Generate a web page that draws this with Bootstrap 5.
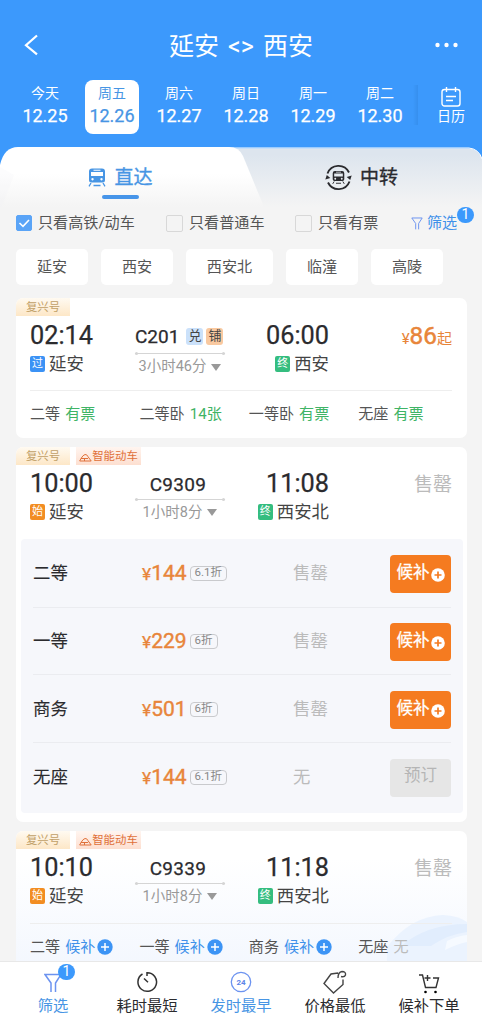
<!DOCTYPE html>
<html lang="zh-CN">
<head>
<meta charset="utf-8">
<meta name="viewport" content="width=device-width, initial-scale=1">
<title>延安 - 西安</title>
<link href="https://cdn.jsdelivr.net/npm/bootstrap@5.3.0/dist/css/bootstrap.min.css" rel="stylesheet">
<style>
:root{--blue:#3c99fc;--orange:#e8853a;--green:#3fb466}
html,body{height:100%}
body{font-family:Roboto,"Noto Sans CJK SC",sans-serif;background:#f4f4f4;color:#555;font-size:15.1px;line-height:20px}
svg{display:block;flex:none}
.app-shell{height:1024px;width:482px;overflow:hidden}
.top-area{background:var(--blue);height:147px}
.title-line{height:50px;padding:0 22px 0 23px;margin-top:20px;font-size:25px}
.route{gap:9px;line-height:30px;padding:3px 0 0 5px}
.days{padding:10px 0 0 11.5px;height:64px}
.day{width:67px;flex:none}
.day-box{width:54px;height:54px;border-radius:8px;font-size:14px;padding-top:3px}
.day-box b{font-weight:400;-webkit-text-stroke:.25px currentColor;font-size:18px;line-height:22px;margin-top:2px}
.day-box.on{background:#fff;color:#4795e4}
.cal{width:67px;font-size:14px;padding-top:7px;line-height:19px;flex:none}
.shade{width:5px;height:40px;margin-top:5px;margin-left:-1px;flex:none;background:linear-gradient(90deg,#3c99fc,#368fee)}
.tabs{height:60px;background:var(--blue)}
.tabs>.tab-bg{position:absolute;left:0;top:0}
.tab{position:relative;width:241px;height:60px;font-size:19px;padding-top:1px}
.tab.left{color:#4795e4;-webkit-text-stroke:.35px currentColor}
.tab.right{color:#2a2a2e;-webkit-text-stroke:.35px currentColor}
.tab.left::after{content:"";position:absolute;left:102px;top:48px;width:37px;height:4px;border-radius:2px;background:#4795e9}
.opts{height:30px;margin-top:1px;padding:0 16px}
.tick{width:17px;height:17px;border:1px solid #d8d8d8;border-radius:2px;margin-right:6px}
.tick.on{background:#5aa4f7;border-color:#5aa4f7;width:16px;height:16px}
.num-badge{position:absolute;background:var(--blue);color:#fff;width:17px;height:16px;border-radius:8px;font-size:14px;line-height:15px;text-align:center}
.chips{gap:13px;padding:11px 16px 0}
.chip{background:#fff;border-radius:5px;height:36px;line-height:36px;padding:0 20.9px}
.trip{background:#fff;border-radius:7px;margin:0 15px 0 16px;overflow:hidden;position:relative;flex:none}
.tags{height:18px;gap:6px;font-size:11.4px;line-height:18px}
.tag-a{width:54px;background:linear-gradient(#fffaf1,#fde7c7);color:#c1a067}
.tag-b{width:65px;background:linear-gradient(#fff5f0,#fddfd0);color:#e0713a}
.info{display:grid;grid-template-columns:105px 90px 104px 1fr;padding:1.5px 15px 0 14px;height:74px}
.clock{font-size:25.3px;line-height:36px;height:36px;color:#2b2b2e;-webkit-text-stroke:.25px currentColor}
.place{font-size:17.4px;height:20px;gap:4px;color:#444}
.mk{width:15px;height:16px;border-radius:2px;color:#fff;font-size:11px;line-height:15px;text-align:center}
.mk.g{background:#35bd7f}.mk.o{background:#f28d22}.mk.b{background:#3b92f5}
.mid{padding-top:8px}
.code{font-size:19px;height:22px;line-height:22px;color:#2b2b2e;-webkit-text-stroke:.25px currentColor;gap:3px}
.code.solo{letter-spacing:.3px;margin-left:-4px}
.mini{width:17px;height:17px;border-radius:3px;font-size:13px;line-height:16px;text-align:center;-webkit-text-stroke:0;color:#444}
.mini.x{background:#cbe1fa}.mini.y{background:#f9c9a0}
.rule{width:90px;height:1px;background:#d5d5d5;margin-top:2.5px;position:relative}
.rule::before,.rule::after{content:"";position:absolute;width:3px;height:3px;border-radius:50%;background:#d5d5d5;top:-1px;left:0}
.rule::after{left:auto;right:0}
.dur{font-size:14.5px;color:#999;gap:5px;margin-top:3px}
.tall .rule{margin-top:5.5px}
.tri{border:5px solid transparent;border-top:7px solid #999;border-bottom:0}
.sold{font-size:19px;color:#bbb;line-height:37px}
.fare{color:var(--orange);height:38px;line-height:35px}
.fare b{font-weight:400;font-size:24.3px;-webkit-text-stroke:.5px currentColor}
.seats{display:grid;grid-template-columns:repeat(4,109.4px);margin:0 15px 0 14px;border-top:1px solid #eee;height:47.5px;line-height:47.5px}
.seats svg{margin-left:2px}
.gap-sm{margin-left:5px}
.ok{color:var(--green)}
.wl{color:#3f91ea}
.panel{background:#f6f7fb;border-radius:4px;margin:0 4.5px 0 5px;height:274px;padding:0 12px}
.line{display:grid;grid-template-columns:109px 151px 1fr auto;height:67.7px;align-items:center;border-bottom:1px solid #ebecf0;font-size:17.4px}
.line:first-child{height:69px}
.line:last-child{border:0}
.line .nm{color:#2b2b2e;-webkit-text-stroke:.1px currentColor}
.cost{color:var(--orange);-webkit-text-stroke:.25px currentColor;padding-top:2px}
.cost b{font-weight:400;font-size:21px;-webkit-text-stroke:.4px currentColor}
.off{border:1px solid #c9cacd;border-radius:4px;color:#888;font-size:11.5px;height:15px;line-height:11px;padding:0 4px;margin-left:3px;-webkit-text-stroke:0}
.dim{color:#bbb}
.panel .dim{padding-top:1px}
.buy{width:61px;height:38px;border:0;border-radius:4px;background:#f57b20;color:#fff;font-size:16.5px;padding:0 0 2px 1px;margin-top:3px;-webkit-text-stroke:.3px currentColor;gap:1px}
.buy svg{margin-top:3px}
.buy.no{background:#e6e6e6;color:#b5b5b5;-webkit-text-stroke:0;padding-bottom:4px}
.sky{background:linear-gradient(#fff 20%,#f3f7fe)}
.cloud{position:absolute;right:0;bottom:0}
.trip>:not(.cloud){position:relative}
.foot{height:63px;background:#fff;border-top:1px solid #e8e8e8;padding:0 6px;position:relative;z-index:2;font-size:15.3px;color:#2b2b2e}
.foot>div{width:94px;padding-top:8px;position:relative}
.foot svg{height:24px;margin-bottom:2px}
.foot .act{color:#4795e4}
</style>
</head>
<body>
<svg width="0" height="0" class="position-absolute">
  <symbol id="plus-w" viewBox="0 0 14 14"><circle cx="7" cy="7" r="6.8" fill="#fff"/><path d="M7 3.500v7M3.500 7h7" stroke="#f57b20" stroke-width="1.700"/></symbol>
  <symbol id="plus-b" viewBox="0 0 16 16"><circle cx="8" cy="8" r="7.7" fill="#3c94f5"/><path d="M8 4v8M4 8h8" stroke="#fff" stroke-width="1.500"/></symbol>
  <symbol id="funnel" viewBox="0 0 18 20"><path d="M7 19V10L1 1.500H17L11.500 10V19" fill="none" stroke="#6c93f0" stroke-width="1.500"/></symbol>
  <symbol id="loco" viewBox="0 0 18 19"><path fill="currentColor" stroke="none" fill-rule="evenodd" d="M4 .5h10a3 3 0 0 1 3 3V12a2.500 2.500 0 0 1-2.500 2.500h-11A2.500 2.500 0 0 1 1 12V3.500a3 3 0 0 1 3-3ZM3 4v4h12V4ZM5.500 1.700v1h7v-1ZM4.500 10a1.200 1.200 0 1 0 .01 0ZM13.500 10a1.200 1.200 0 1 0 .01 0Z"/><path d="M3 15 1 18.300M15 15l2 3.300M5.500 17.500h7" stroke="currentColor" stroke-width="1.300"/></symbol>
  <symbol id="hill" viewBox="0 0 13 9"><path d="M.7 8 2 5.500Q4 2 6 1.500q2-.3 3 2.200l3.200 4.300H.700M2 5.500h7M5.500 8V5.500" fill="none" stroke="#e0713a" stroke-width="1"/></symbol>
</svg>
<div class="app-shell d-flex flex-column">
  <header class="top-area text-white flex-shrink-0">
    <div class="title-line d-flex align-items-center justify-content-between">
      <svg width="20" height="22" viewBox="0 0 20 22"><path d="M14 1.500 3 11.300l11 9" fill="none" stroke="#fff" stroke-width="2.200"/></svg>
      <div class="route d-flex"><span>延安</span><span>&lt;&gt;</span><span>西安</span></div>
      <svg width="26" height="6" viewBox="0 0 26 6" fill="#fff"><circle cx="3.500" cy="3" r="2.200"/><circle cx="12.500" cy="3" r="2.200"/><circle cx="21.500" cy="3" r="2.200"/></svg>
    </div>
    <div class="days d-flex">
      <div class="day d-flex justify-content-center"><div class="day-box d-flex flex-column align-items-center">今天<b>12.25</b></div></div>
      <div class="day d-flex justify-content-center"><div class="day-box on d-flex flex-column align-items-center">周五<b>12.26</b></div></div>
      <div class="day d-flex justify-content-center"><div class="day-box d-flex flex-column align-items-center">周六<b>12.27</b></div></div>
      <div class="day d-flex justify-content-center"><div class="day-box d-flex flex-column align-items-center">周日<b>12.28</b></div></div>
      <div class="day d-flex justify-content-center"><div class="day-box d-flex flex-column align-items-center">周一<b>12.29</b></div></div>
      <div class="day d-flex justify-content-center"><div class="day-box d-flex flex-column align-items-center">周二<b>12.30</b></div></div>
      <div class="shade"></div>
      <div class="cal d-flex flex-column align-items-center">
        <svg width="20" height="20" viewBox="0 0 20 20" fill="none" stroke="#fff" stroke-width="1.400"><rect x="1" y="2.500" width="18" height="16.500" rx="2.500"/><path d="M5.500 0v5M14.500 0v5M5 9.500h10M5 13.500h7"/></svg>
        <span>日历</span>
      </div>
    </div>
  </header>

  <div class="tabs d-flex position-relative flex-shrink-0">
    <svg class="tab-bg" width="482" height="60" viewBox="0 0 482 60">
      <defs>
        <linearGradient id="ga" x2="0" y2="1"><stop offset=".1" stop-color="#dde5ee"/><stop offset="1" stop-color="#f4f4f4"/></linearGradient>
        <linearGradient id="gb" x2="0" y2="1"><stop offset=".45" stop-color="#fff"/><stop offset="1" stop-color="#f4f4f4"/></linearGradient>
      </defs>
      <path d="M200 1.500H469Q479 2 482 12V60H200Z" fill="url(#ga)"/>
      <path d="M200 1H469Q479 2 482 12" fill="none" stroke="#fff"/>
      <path d="M0 60V18Q4 0 18 0H229Q239 0 243 9L264 60Z" fill="url(#gb)"/>
      <path d="M0 20V60H2L14 28Z" fill="#eef1f5" opacity=".2"/>
    </svg>
    <div class="tab left d-flex align-items-center justify-content-center"><svg width="18" height="19" class="me-2"><use href="#loco"/></svg>直达</div>
    <div class="tab right d-flex align-items-center justify-content-center">
      <svg width="27" height="27" viewBox="0 0 27 27" class="me-2"><path d="M2.500 9.500A11.700 11.700 0 0 1 24 8.500M24.500 17.500A11.700 11.700 0 0 1 3 18.500" fill="none" stroke="currentColor" stroke-width="1.900"/><path d="m.3 15.500 1.500-4.500 3.500 3zM26.700 11.500l-1.500 4.500-3.500-3z" fill="currentColor"/><svg x="7" y="6" width="13" height="15"><use href="#loco"/></svg></svg>中转</div>
  </div>

  <div class="opts d-flex align-items-center position-relative flex-shrink-0">
    <div class="d-flex align-items-center" style="width:150px"><span class="tick on"><svg width="14" height="14" viewBox="0 0 14 14"><path d="m2.500 7 3.500 3.300 6-6.300" fill="none" stroke="#fff" stroke-width="1.600"/></svg></span>只看高铁/动车</div>
    <div class="d-flex align-items-center" style="width:129px"><span class="tick"></span>只看普通车</div>
    <div class="d-flex align-items-center" style="width:116px"><span class="tick"></span>只看有票</div>
    <div class="d-flex align-items-center wl"><svg width="12" height="13" class="me-1"><use href="#funnel"/></svg>筛选</div>
    <span class="num-badge" style="left:457px;top:-1px">1</span>
  </div>

  <div class="chips d-flex flex-shrink-0">
    <span class="chip">延安</span><span class="chip">西安</span><span class="chip">西安北</span><span class="chip">临潼</span><span class="chip">高陵</span>
  </div>

  <main class="flex-fill overflow-hidden d-flex flex-column" style="gap:9px;padding-top:13px;min-height:0">
    <section class="trip tall">
      <div class="tags d-flex"><span class="tag-a text-center">复兴号</span></div>
      <div class="info">
        <div><div class="clock">02:14</div><div class="place d-flex align-items-center"><span class="mk b">过</span>延安</div></div>
        <div class="mid"><div class="code d-flex align-items-center"><span class="me-1">C201</span><span class="mini x">兑</span><span class="mini y">铺</span></div><div class="rule"></div><div class="dur d-flex align-items-center justify-content-center">3小时46分<i class="tri"></i></div></div>
        <div class="text-end"><div class="clock">06:00</div><div class="place d-flex align-items-center justify-content-end"><span class="mk g">终</span>西安</div></div>
        <div class="fare text-end">¥<b>86</b>起</div>
      </div>
      <div class="seats"><span>二等<span class="ok gap-sm">有票</span></span><span>二等卧<span class="ok gap-sm">14张</span></span><span>一等卧<span class="ok gap-sm">有票</span></span><span>无座<span class="ok gap-sm">有票</span></span></div>
    </section>

    <section class="trip" style="height:375px">
      <div class="tags d-flex"><span class="tag-a text-center">复兴号</span><span class="tag-b d-flex align-items-center justify-content-center"><svg width="13" height="9" class="mt-1"><use href="#hill"/></svg>智能动车</span></div>
      <div class="info">
        <div><div class="clock">10:00</div><div class="place d-flex align-items-center"><span class="mk o">始</span>延安</div></div>
        <div class="mid"><div class="code solo text-center">C9309</div><div class="rule"></div><div class="dur d-flex align-items-center justify-content-center">1小时8分<i class="tri"></i></div></div>
        <div class="text-end"><div class="clock">11:08</div><div class="place d-flex align-items-center justify-content-end"><span class="mk g">终</span>西安北</div></div>
        <div class="sold text-end">售罄</div>
      </div>
      <div class="panel">
        <div class="line"><span class="nm">二等</span><span class="d-flex align-items-center cost"><span>¥<b>144</b></span><span class="off">6.1折</span></span><span class="dim">售罄</span><button class="buy d-flex align-items-center justify-content-center">候补<svg width="14" height="14"><use href="#plus-w"/></svg></button></div>
        <div class="line"><span class="nm">一等</span><span class="d-flex align-items-center cost"><span>¥<b>229</b></span><span class="off">6折</span></span><span class="dim">售罄</span><button class="buy d-flex align-items-center justify-content-center">候补<svg width="14" height="14"><use href="#plus-w"/></svg></button></div>
        <div class="line"><span class="nm">商务</span><span class="d-flex align-items-center cost"><span>¥<b>501</b></span><span class="off">6折</span></span><span class="dim">售罄</span><button class="buy d-flex align-items-center justify-content-center">候补<svg width="14" height="14"><use href="#plus-w"/></svg></button></div>
        <div class="line"><span class="nm">无座</span><span class="d-flex align-items-center cost"><span>¥<b>144</b></span><span class="off">6.1折</span></span><span class="dim">无</span><button class="buy no d-flex align-items-center justify-content-center">预订</button></div>
      </div>
    </section>

    <section class="trip sky">
      <svg class="cloud" width="80" height="60" viewBox="0 0 80 60"><path d="M0 37Q24 6 56 5 72 6 80 12V60H0Z" fill="#ebf3fe"/><path d="M14 36Q40 14 80 14V22Q62 24 44 36Z" fill="#e1edfd"/><path d="M60 31Q70 26 80 25V32Q70 34 58 40Z" fill="#f6faff"/></svg>
      <div class="tags d-flex"><span class="tag-a text-center">复兴号</span><span class="tag-b d-flex align-items-center justify-content-center"><svg width="13" height="9" class="mt-1"><use href="#hill"/></svg>智能动车</span></div>
      <div class="info">
        <div><div class="clock">10:10</div><div class="place d-flex align-items-center"><span class="mk o">始</span>延安</div></div>
        <div class="mid"><div class="code solo text-center">C9339</div><div class="rule"></div><div class="dur d-flex align-items-center justify-content-center">1小时8分<i class="tri"></i></div></div>
        <div class="text-end"><div class="clock">11:18</div><div class="place d-flex align-items-center justify-content-end"><span class="mk g">终</span>西安北</div></div>
        <div class="sold text-end">售罄</div>
      </div>
      <div class="seats">
        <span class="d-flex align-items-center">二等<span class="wl gap-sm">候补</span><svg width="16" height="16"><use href="#plus-b"/></svg></span>
        <span class="d-flex align-items-center">一等<span class="wl gap-sm">候补</span><svg width="16" height="16"><use href="#plus-b"/></svg></span>
        <span class="d-flex align-items-center">商务<span class="wl gap-sm">候补</span><svg width="16" height="16"><use href="#plus-b"/></svg></span>
        <span>无座<span class="dim gap-sm">无</span></span>
      </div>
    </section>
  </main>

  <nav class="foot d-flex flex-shrink-0">
    <div class="act d-flex flex-column align-items-center"><svg width="18" viewBox="0 0 18 24"><use href="#funnel" y="3" width="18" height="20"/></svg>筛选<span class="num-badge" style="left:52px;top:2px">1</span></div>
    <div class="d-flex flex-column align-items-center"><svg width="22" viewBox="0 0 22 24"><path d="M6.500 4A9.300 9.300 0 1 0 11 2.700V6M8 8.500l4 3.800" fill="none" stroke="#333" stroke-width="1.500"/></svg>耗时最短</div>
    <div class="act d-flex flex-column align-items-center"><svg width="22" viewBox="0 0 22 24"><circle cx="11" cy="12" r="9.700" fill="none" stroke="#6c93f0" stroke-width="1.300"/><text x="11" y="15" text-anchor="middle" font-size="8" font-weight="700" fill="#5b86e8">24</text></svg>发时最早</div>
    <div class="d-flex flex-column align-items-center"><svg width="26" viewBox="0 0 26 24"><path d="M16 3 9 4 2 13.500 11.500 23 21 14.500V9.500M16 8Q16 2 20 1.500 24 1.500 23.500 5 22.500 7.500 19 6.500" fill="none" stroke="#444" stroke-width="1.400"/></svg>价格最低</div>
    <div class="d-flex flex-column align-items-center"><svg width="22" viewBox="0 0 22 24"><path d="M1 5h3.500l3 12.500H18L20.500 8H15M9.500 5v6M6.500 8h6" fill="none" stroke="#333" stroke-width="1.400"/><circle cx="7.500" cy="22" r="1.300"/><circle cx="17.500" cy="22" r="1.300"/></svg>候补下单</div>
  </nav>
</div>
<script src="https://cdn.jsdelivr.net/npm/bootstrap@5.3.0/dist/js/bootstrap.bundle.min.js"></script>
</body>
</html>
